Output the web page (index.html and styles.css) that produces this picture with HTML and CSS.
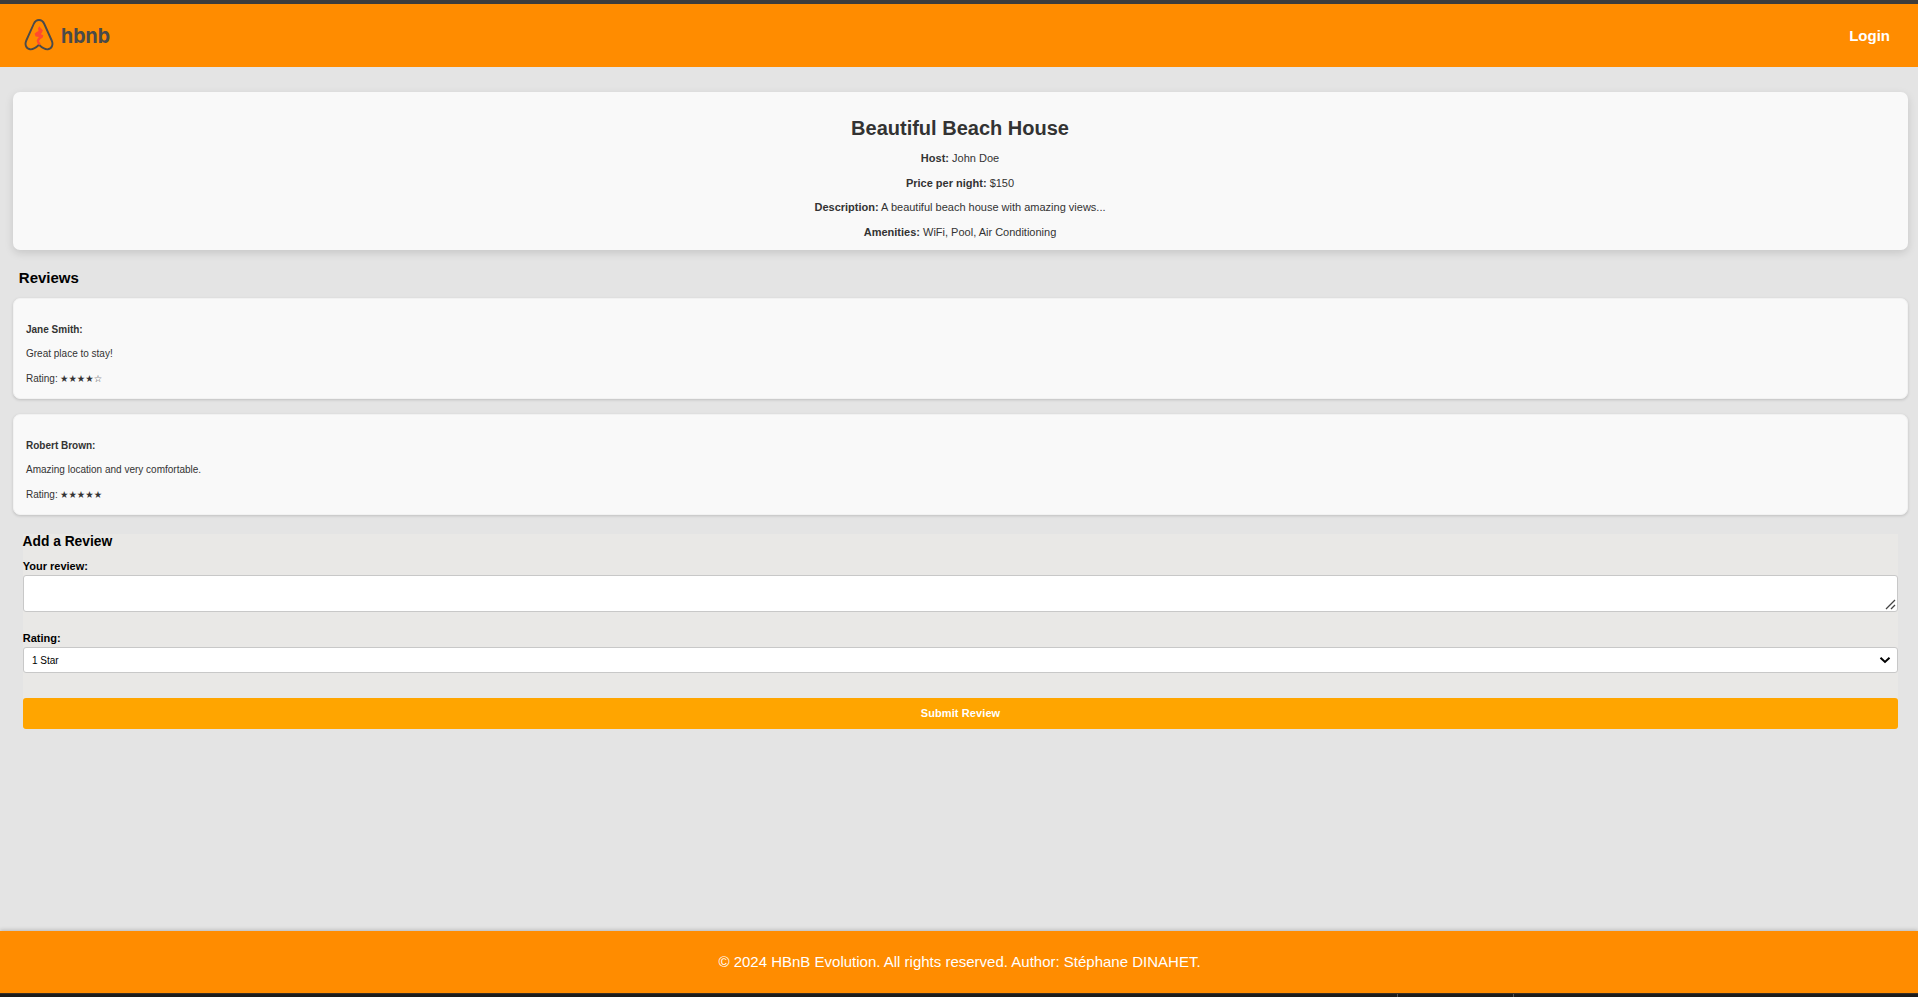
FILE: index.html
```html
<!DOCTYPE html>
<html lang="en">
<head>
<meta charset="utf-8">
<title>Place Details</title>
<link rel="stylesheet" href="styles.css">
</head>
<body>
<div class="top-strip"></div>
<header class="header">
  <svg class="logo" width="100" height="42" viewBox="0 -4 100 42">
    <path class="logo-outline" d="M15 2C12.500 2 10.800 3.400 9.700 6L2.300 22.500C0.500 26.500 2 30.700 6 31.300C9.300 31.800 12.700 29 15 26.800C17.300 29 20.700 31.800 24 31.300C28 30.700 29.500 26.500 27.700 22.500L20.300 6C19.200 3.400 17.500 2 15 2Z"/>
    <path class="logo-flame" d="M15.400 8.200L16.800 10.200L18.900 12.300L17.800 15L16.600 16L19.300 17.200L18.700 19.600L16.200 21.200L14.900 23.200L16.600 25.600L15.200 27.500L13.400 25.200L12.600 22.700L13.700 20.400L15 19L11.600 18.400L10.600 15.700L12.600 14L14.600 13L13.900 10.500Z"/>
    <text class="logo-text" x="37" y="24.500" textLength="49" lengthAdjust="spacingAndGlyphs">hbnb</text>
  </svg>
  <a class="login">Login</a>
</header>
<main class="main">
  <section class="place">
    <h1>Beautiful Beach House</h1>
    <p><strong>Host:</strong> John Doe</p>
    <p><strong>Price per night:</strong> $150</p>
    <p><strong>Description:</strong> A beautiful beach house with amazing views...</p>
    <p><strong>Amenities:</strong> WiFi, Pool, Air Conditioning</p>
  </section>
  <h2 class="reviews-title">Reviews</h2>
  <article class="review">
    <p><strong>Jane Smith:</strong></p>
    <p>Great place to stay!</p>
    <p>Rating: <span class="stars">★★★★☆</span></p>
  </article>
  <article class="review">
    <p><strong>Robert Brown:</strong></p>
    <p>Amazing location and very comfortable.</p>
    <p>Rating: <span class="stars">★★★★★</span></p>
  </article>
  <form class="form">
    <h3>Add a Review</h3>
    <label>Your review:</label>
    <div class="field area">
      <svg class="grip" width="11" height="11" viewBox="0 0 11 11"><path d="M1 10L10 1M6 10L10 6"/></svg>
    </div>
    <label>Rating:</label>
    <div class="field select">
      <span>1 Star</span>
      <svg class="chevron" width="12" height="8" viewBox="0 0 12 8"><path d="M1.500 1.800L6 6L10.500 1.800"/></svg>
    </div>
    <button class="submit" type="button">Submit Review</button>
  </form>
</main>
<footer class="footer">© 2024 HBnB Evolution. All rights reserved. Author: Stéphane DINAHET.</footer>
<div class="bottom-strip"><i></i><i></i></div>
</body>
</html>
```
FILE: styles.css
```css
* { box-sizing: border-box; }
body {
  margin: 0;
  height: 997px;
  display: flex;
  flex-direction: column;
  overflow: hidden;
  background: #e4e4e4;
  font-family: "Liberation Sans", Arial, sans-serif;
  color: #000;
}
h1, h2, h3, p { margin: 0; }
.top-strip { height: 4px; background: #3c3c3c; }
.header {
  height: 63px;
  padding: 0 28px 0 24px;
  display: flex;
  align-items: center;
  justify-content: space-between;
  background: #ff8c00;
}
.logo { margin-bottom: 2px; }
.logo-outline { fill: none; stroke: #4a4a4a; stroke-width: 1.9; }
.logo-flame { fill: #ff4a2e; }
.logo-text { font: 700 20.500px Inter, sans-serif; fill: #4a4a4a; }
.login { color: #fff; font-size: 15px; font-weight: 700; }
.main { flex: 1; padding: 25px 10px 0 13px; }
.place {
  height: 158px;
  padding: 24px 1px 0 0;
  border-radius: 7px;
  background: #f9f9f9;
  box-shadow: 0 3px 9px rgba(0, 0, 0, 0.13);
  color: #333;
  text-align: center;
}
.place h1 { font-size: 20px; line-height: 24px; margin-bottom: 6px; }
.place p { font-size: 11px; line-height: 24.600px; }
.reviews-title { margin: 19px 0 11px 5.800px; font-size: 15px; line-height: 18px; }
.review {
  height: 101px;
  margin-bottom: 15px;
  padding: 19px 12px;
  border: 1px solid #f2f2f2;
  border-radius: 7px;
  background: #f9f9f9;
  box-shadow: 0 1px 3px rgba(0, 0, 0, 0.16);
  color: #333;
  font-size: 10px;
  line-height: 24.400px;
}
.stars { font-family: "DejaVu Sans", sans-serif; font-size: 9.800px; line-height: 1; display: inline-block; transform: scaleX(0.96); transform-origin: left; }
.form {
  height: 195px;
  margin: 19px 10px 0;
  display: flex;
  flex-direction: column;
  background: #e9e8e6;
}
.form h3 { font-size: 13.800px; line-height: 15px; margin: 0 0 11px -0.500px; }
.form label { font-size: 11px; line-height: 13px; margin: 0 0 2px -0.300px; font-weight: 700; }
.field { border: 1px solid #c8c8c8; border-radius: 3px; background: #fff; }
.area {
  height: 37px;
  margin-bottom: 20px;
  padding: 0 1px 1px;
  display: flex;
  align-items: flex-end;
  justify-content: flex-end;
}
.grip path { fill: none; stroke: #444; stroke-width: 1.3; }
.select {
  height: 26px;
  margin-bottom: 25px;
  padding: 1px 6px 0 8px;
  display: flex;
  align-items: center;
  justify-content: space-between;
  font-size: 10px;
}
.chevron { margin-bottom: 1px; }
.chevron path { fill: none; stroke: #000; stroke-width: 2; }
.submit {
  height: 31px;
  padding: 0 0 2px;
  border: 0;
  border-radius: 3px;
  background: #ffa500;
  color: #fff;
  font: 700 11px "Liberation Sans", Arial, sans-serif;
  letter-spacing: 0.1px;
}
.footer {
  height: 62px;
  padding-left: 1px;
  background: #ff8c00;
  box-shadow: 0 -1px 4px rgba(0, 0, 0, 0.2);
  color: #fff;
  font-size: 15px;
  line-height: 62px;
  text-align: center;
}
.bottom-strip {
  height: 4px;
  padding-left: 1397px;
  display: flex;
  gap: 115px;
  background: #1c1c1c;
  border-top: 1px solid #3a3026;
}
.bottom-strip i { width: 1px; height: 3px; background: #555; }
```
